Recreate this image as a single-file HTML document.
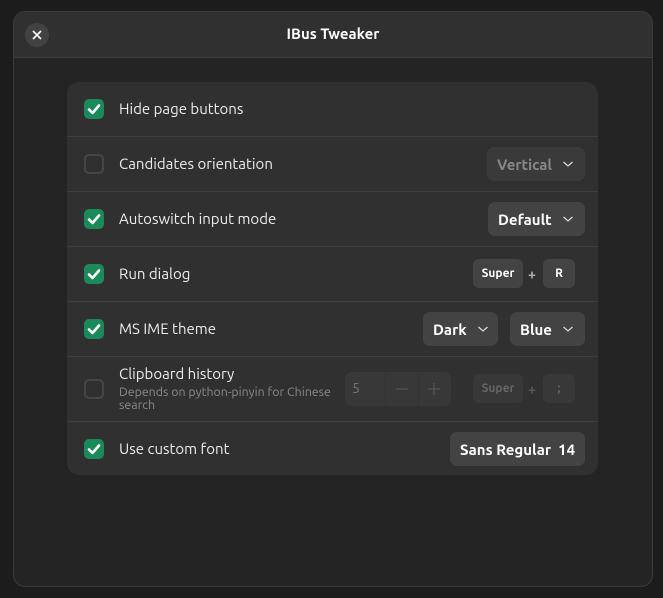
<!DOCTYPE html>
<html><head><style>
*{margin:0;padding:0;box-sizing:border-box}
body{width:663px;height:598px;background:#1c1c1c;font-family:"Ubuntu","Liberation Sans",sans-serif;color:#fff;position:relative;overflow:hidden}
.win{position:absolute;left:13px;top:11px;width:640px;height:576px;background:#242424;border:1px solid #3a3a3a;border-radius:12px;overflow:hidden}
.hb{position:absolute;left:0;top:0;width:100%;height:46px;background:#303030;border-bottom:1px solid #3d3d3d}
.title{position:absolute;left:0;width:100%;top:13px;text-align:center;font-weight:bold;font-size:15px}
.close{position:absolute;left:11px;top:11px;width:24px;height:24px;border-radius:50%;background:#424242}
.card{position:absolute;left:67px;top:82px;width:531px;height:393px;background:#303030;border-radius:12px}
.sep{position:absolute;left:67px;width:531px;height:1px;background:#3e3e3e}
.cb{position:absolute;left:84px;width:20px;height:20px;border-radius:5px;background:#1a8a5a}
.cb.off{background:transparent;border:2px solid #464646}
.lbl{position:absolute;left:119px;font-size:15px;color:#eee}
.btn{position:absolute;height:34px;background:#434343;border-radius:7px;font-weight:bold;font-size:15px;display:flex;align-items:center;padding-left:10px;color:#fff}
.btn svg{margin-left:10px}
.key{position:absolute;height:29px;background:#434343;border-radius:6px;font-weight:bold;font-size:12px;display:flex;align-items:center;justify-content:center}
.plus{position:absolute;font-size:14px;color:#aaa;font-weight:bold}
</style></head><body>
<div class="win">
 <div class="hb"><div class="close"><svg width="24" height="24"><path d="M8 8L16 16M16 8L8 16" stroke="#fff" stroke-width="1.6"/></svg></div><div class="title">IBus Tweaker</div></div>
</div>
<div class="card"></div>
<div class="sep" style="top:136px"></div><div class="sep" style="top:191px"></div><div class="sep" style="top:246px"></div><div class="sep" style="top:301px"></div><div class="sep" style="top:356px"></div><div class="sep" style="top:421px"></div>

<svg width="0" height="0" style="position:absolute"><defs><symbol id="ck" viewBox="0 0 20 20"><path d="M5 10.5L8.5 14L15 6.5" fill="none" stroke="#fff" stroke-width="2.6" stroke-linecap="round" stroke-linejoin="round"/></symbol><symbol id="dn" viewBox="0 0 12 8"><path d="M1.5 2L6 6L10.5 2" fill="none" stroke="#ddd" stroke-width="1.2"/></symbol></defs></svg>

<div class="cb" style="top:99px"><svg width="20" height="20"><use href="#ck"/></svg></div>
<div class="lbl" style="top:100px">Hide page buttons</div>

<div class="cb off" style="top:154px"></div>
<div class="lbl" style="top:155px">Candidates orientation</div>
<div class="btn" style="left:487px;top:147px;width:98px;background:#3a3a3a;color:#888">Vertical<svg width="12" height="8"><use href="#dn"/></svg></div>

<div class="cb" style="top:209px"><svg width="20" height="20"><use href="#ck"/></svg></div>
<div class="lbl" style="top:210px">Autoswitch input mode</div>
<div class="btn" style="left:488px;top:202px;width:97px">Default<svg width="12" height="8"><use href="#dn"/></svg></div>

<div class="cb" style="top:264px"><svg width="20" height="20"><use href="#ck"/></svg></div>
<div class="lbl" style="top:265px">Run dialog</div>
<div class="key" style="left:473px;top:259px;width:50px">Super</div>
<div class="plus" style="left:528px;top:266px">+</div>
<div class="key" style="left:543px;top:259px;width:32px">R</div>

<div class="cb" style="top:319px"><svg width="20" height="20"><use href="#ck"/></svg></div>
<div class="lbl" style="top:320px">MS IME theme</div>
<div class="btn" style="left:423px;top:312px;width:75px">Dark<svg width="12" height="8"><use href="#dn"/></svg></div>
<div class="btn" style="left:510px;top:312px;width:75px">Blue<svg width="12" height="8"><use href="#dn"/></svg></div>

<div class="cb off" style="top:379px"></div>
<div class="lbl" style="top:365px">Clipboard history</div>
<div class="lbl" style="top:386px;font-size:12.4px;color:#8a8a8a;line-height:13px;width:230px">Depends on python-pinyin for Chinese search</div>
<div style="position:absolute;left:345px;top:372px;width:106px;height:34px;background:#383838;border-radius:7px">
 <div style="position:absolute;left:7px;top:8px;font-size:14px;color:#777">5</div>
 <div style="position:absolute;left:40px;top:0;width:1px;height:34px;background:#333"></div>
 <div style="position:absolute;left:73px;top:0;width:1px;height:34px;background:#333"></div>
 <svg style="position:absolute;left:50px;top:10px" width="14" height="14"><path d="M1 7H13" stroke="#555" stroke-width="1.3"/></svg>
 <svg style="position:absolute;left:82px;top:10px" width="14" height="14"><path d="M1 7H13M7 1V13" stroke="#555" stroke-width="1.3"/></svg>
</div>
<div class="key" style="left:473px;top:374px;width:50px;background:#383838;color:#666">Super</div>
<div class="plus" style="left:528px;top:381px;color:#555">+</div>
<div class="key" style="left:543px;top:374px;width:32px;background:#383838;color:#666">;</div>

<div class="cb" style="top:439px"><svg width="20" height="20"><use href="#ck"/></svg></div>
<div class="lbl" style="top:440px">Use custom font</div>
<div class="btn" style="left:450px;top:432px;width:135px">Sans Regular&nbsp; 14</div>
</body></html>
